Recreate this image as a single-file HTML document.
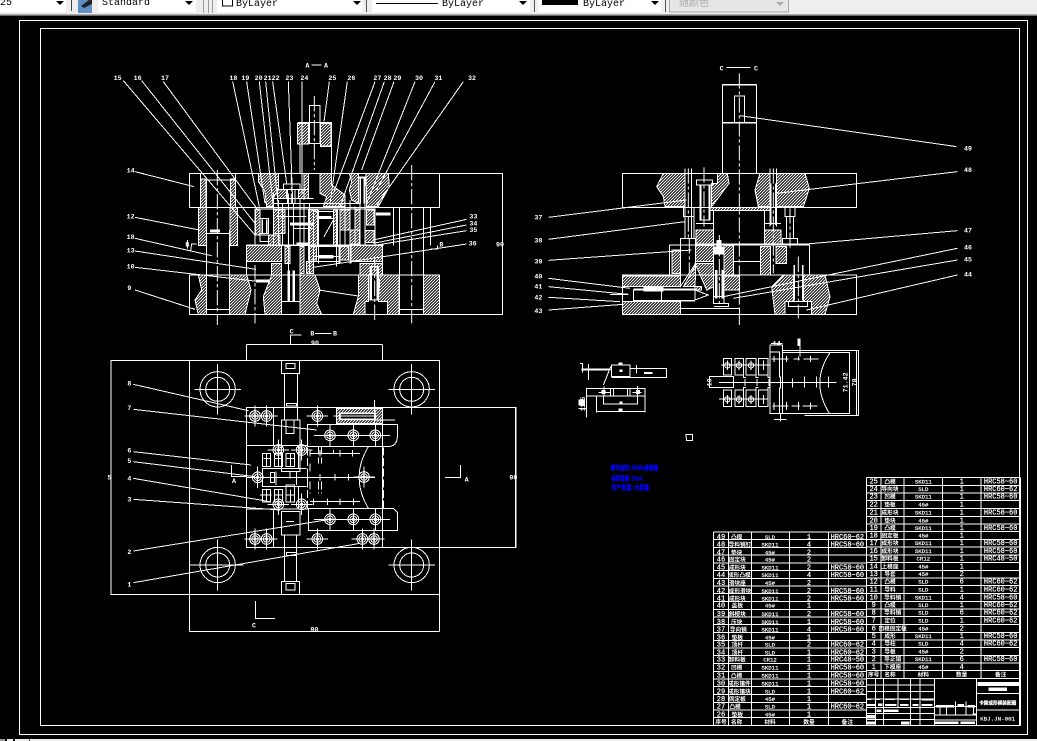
<!DOCTYPE html>
<html><head><meta charset="utf-8"><style>
html,body{margin:0;padding:0;background:#000;width:1037px;height:741px;overflow:hidden}
svg{display:block;position:absolute;left:0;top:0}
.l{fill:none;stroke:#fff;stroke-width:3;shape-rendering:crispEdges}
.h{fill:url(#h);stroke:#fff;stroke-width:3;shape-rendering:crispEdges}
.w{fill:#fff;stroke:none;shape-rendering:crispEdges}
.c{fill:none;stroke:#fff;stroke-width:3;stroke-dasharray:46 8 10 8}
text{font-family:"Liberation Mono","Noto Sans CJK SC",monospace;fill:#fff;stroke:none;font-weight:bold}
.t{font-size:20px;text-anchor:middle}
.m{font-size:21px;text-anchor:middle;font-weight:normal;stroke:#fff;stroke-width:.6px}
text[x="210"],text[x="670"]{font-size:17px}
.k{font-family:"Noto Sans CJK SC",sans-serif;font-size:17px;text-anchor:middle}
.b{font-family:"Noto Sans CJK SC",sans-serif;font-size:19px;fill:#00f;stroke:#00f;stroke-width:.8px}
.bar{font-family:"Liberation Mono","Noto Sans CJK SC",monospace;font-size:10px;fill:#000;font-weight:normal}
</style></head><body>
<svg width="1037" height="741" viewBox="0 0 1037 741" xmlns="http://www.w3.org/2000/svg">
<defs>
<pattern id="h" width="9" height="9" patternUnits="userSpaceOnUse"><path d="M-2 11L11 -2M-2 2L2 -2M7 11L11 7" stroke="#fff" stroke-width="3" fill="none"/></pattern>
<g id="s"><circle r="16" class="l"/><circle r="10" class="l"/><circle r="5" class="w"/><path class="l" d="M-32 0H32M0 -32V32"/></g>
<g id="g"><circle r="53" class="l"/><circle r="36" class="l"/><path class="l" d="M-70 0H70M0 -76V76"/></g>
</defs>
<rect width="1037" height="741" fill="#000"/>
<!-- toolbar -->
<rect width="1037" height="14" fill="#eeeeee"/>
<rect y="14" width="1037" height="1" fill="#a9a9a9"/><rect y="15" width="1037" height="1" fill="#6e6e6e"/>
<rect x="0" y="0" width="66" height="12" fill="#fff"/>
<rect x="71" y="0" width="1" height="11" fill="#444"/>
<rect x="78" y="0" width="14" height="13" fill="#5f8fc4"/><path d="M81 6L89 0H92V4L84 8Z" fill="#222"/>
<rect x="98" y="0" width="98" height="12" fill="#fff"/>
<rect x="203" y="0" width="1" height="13" fill="#999"/><rect x="208" y="0" width="1" height="13" fill="#999"/><rect x="212" y="0" width="1" height="13" fill="#999"/>
<rect x="217" y="0" width="146" height="12" fill="#fff"/>
<rect x="222.5" y="-1" width="10" height="7" fill="#fff" stroke="#000"/>
<rect x="366" y="0" width="1" height="12" fill="#555"/>
<rect x="372" y="0" width="158" height="12" fill="#fff"/><rect x="376" y="3" width="62" height="1" fill="#000"/>
<rect x="534" y="0" width="1" height="12" fill="#555"/>
<rect x="538" y="0" width="123" height="12" fill="#fff"/><rect x="542" y="0" width="36" height="5" fill="#000"/>
<rect x="665" y="0" width="1" height="12" fill="#555"/>
<rect x="669.5" y="-1" width="119" height="13" fill="#e6e6e6" stroke="#aaa"/>
<text class="bar" x="0" y="5">25</text><text class="bar" x="102" y="5">Standard</text><text class="bar" x="236" y="6">ByLayer</text><text class="bar" x="442" y="6">ByLayer</text><text class="bar" x="583" y="6">ByLayer</text>
<text class="bar" x="679" y="6" style="fill:#aaa;font-family:'Noto Sans CJK SC',sans-serif">随颜色</text>
<path fill="#000" d="M56 1H64L60 5ZM185 1H193L189 5ZM353 1H361L357 5ZM519 1H527L523 5ZM651 1H659L655 5Z"/><path fill="#aaa" d="M776 2H784L780 6Z"/>
<!-- bottom strip -->
<rect y="739" width="1037" height="2" fill="#eee"/><rect x="0" y="739" width="5" height="2" fill="#999"/><rect x="5" y="739" width="2" height="2" fill="#000"/><rect x="13" y="739" width="2" height="2" fill="#000"/><rect x="29" y="739" width="1" height="2" fill="#444"/>
<!-- frames -->
<rect x="19.5" y="20.5" width="1008" height="714" class="l" style="stroke-width:1"/>
<rect x="40.5" y="28.5" width="979" height="697" class="l" style="stroke-width:1"/>

<!-- LEFT VIEW -->
<g transform="translate(100 60) scale(.33333)">
<path class="l" d="M70 62L465 525M125 62L465 490M190 65L470 445M398 65L478 440M440 65L495 430M478 65L520 440M497 65L535 440M518 65L560 370M565 65L578 430M606 65V400M688 65L672 185M742 65L690 430M825 65L700 400M853 65L720 440M882 65L785 330M945 65L800 430M1005 65L830 390M1090 65L830 435M105 335L282 380M105 472L298 510M105 535L335 587M105 573L468 628M105 622L480 665M105 690L285 748M1100 478L820 540M1100 495L820 550M1100 512L830 555M1100 552L850 590M655 690L775 708M634 15H665"/>
<rect class="l" x="268" y="340" width="751" height="103"/>
<rect class="l" x="268" y="645" width="751" height="118"/>
<path class="l" d="M1019 340H1207V763H1019M302 340V443M406 340V443M320 360V763M388 510V763M318 360H406M320 520H388M320 748H388M899 443V763M970 443V763M899 748H970M880 443V557M992 443V557M268 645H320M388 645H775M440 605V645M600 250V340M694 260V340M592 187H695V258H660M612 340V420M628 136H660V250H628ZM545 680V763H600V680M545 725H600M795 725V763H862V725M810 620H835V720H810ZM262 540V565M1012 557V567H992M290 552H275L272 572"/>
<path class="h" d="M593 190H625V252H593ZM662 190H693V260H662ZM302 357H318V443H302ZM392 357H406V443H392ZM296 443H320V557H296ZM390 443H413V557H390Z"/>
<path class="h" d="M475 340H535V385L520 415V440H500L495 395L475 365ZM660 340H695V375L735 405V440H670L680 410L660 400ZM612 340H625V415H612ZM533 388H560V415H533ZM595 388H625V415H595ZM748 340H775V430L755 420L748 390L755 365ZM798 340H865L868 380L835 440H800Z"/>
<rect class="l" x="465" y="447" width="360" height="108"/>
<rect class="l" x="440" y="557" width="408" height="88"/>
<path class="h" d="M467 450H480V525H467ZM505 525H540V555H505ZM720 450H750V510H720ZM750 510H778V552H750ZM795 512H822V548H795ZM800 450H822V495H800ZM440 557H545V605H440ZM750 557H848V605H750ZM625 450H652V555H625ZM625 560H650V600H625ZM720 560H745V600H720ZM515 610H545V645H515ZM780 610H848V645H780ZM555 560H570V610H555ZM520 450H555V520H520ZM700 450H712V555H700ZM765 450H780V510H765ZM600 560H612V640H600ZM620 605H640V640H620Z"/>
<path class="h" d="M295 645H320V763H295L285 720L305 690ZM388 645H440L453 690L435 763H388ZM515 645H545V763H495L490 710ZM600 645H645L660 690L650 730L665 763H600V725ZM775 645H805V725H795V763H760L775 710ZM840 645H897V763H862V725H835ZM970 645H1019V763H970Z"/>
<path class="l" d="M520 400V555M535 420V555M548 430V555M565 400V640M580 430V555M600 415V660M612 430V640M628 430V640M640 450V640M655 450V610M700 450V555M710 450V620M720 450V610M735 440V555M750 420V610M765 440V555M780 430V555M795 350V555M520 430H780M520 415H640M530 470H620M580 505H640M640 455H700M650 475H700M640 590H720M640 605H720M640 622L850 590M640 560H720M550 372H600V388H550ZM563 388H585V430H563ZM700 480L672 530M480 475H505V520H480ZM480 525H505V545H480Z"/>
<path class="w" d="M440 553H850V558H440ZM465 445H825V449H465ZM775 350H797V355H775ZM778 355H783V430H778ZM790 355H795V430H790ZM563 632H570V725H563ZM578 632H585V725H578ZM812 620H816V720H812ZM830 620H834V720H830ZM590 548H625V558H590ZM468 658H510V667H468ZM330 508H360V517H330ZM828 457H872V467H828ZM570 487H640V497H570ZM650 468H695V476H650ZM655 585H700V596H655ZM484 478H489V520H484ZM498 478H503V520H498ZM715 555H720V610H715ZM750 555H754V610H750Z"/>
<path class="c" d="M352 330V795M643 108V330M935 315V790M465 615V790M824 590V785M574 328V430"/>
<g class="t"><text class="t" x="622" y="22">A</text><text class="t" x="678" y="22">A</text>
<text class="t" x="53" y="60">15</text><text class="t" x="113" y="60">16</text><text class="t" x="195" y="60">17</text><text class="t" x="400" y="60">18</text><text class="t" x="436" y="60">19</text><text class="t" x="476" y="60">20</text><text class="t" x="503" y="60">21</text><text class="t" x="527" y="60">22</text><text class="t" x="568" y="60">23</text><text class="t" x="613" y="60">24</text><text class="t" x="697" y="60">25</text><text class="t" x="754" y="60">26</text><text class="t" x="832" y="60">27</text><text class="t" x="863" y="60">28</text><text class="t" x="892" y="60">29</text><text class="t" x="957" y="60">30</text><text class="t" x="1015" y="60">31</text><text class="t" x="1116" y="60">32</text>
<text class="t" x="92" y="337">14</text><text class="t" x="92" y="475">12</text><text class="t" x="92" y="537">18</text><text class="t" x="92" y="577">13</text><text class="t" x="92" y="625">10</text><text class="t" x="88" y="690">9</text>
<text class="t" x="1120" y="476">33</text><text class="t" x="1120" y="496">34</text><text class="t" x="1120" y="516">35</text><text class="t" x="1118" y="556">36</text>
<text class="t" x="262" y="559">B</text><text class="t" x="1024" y="559">B</text><text class="t" x="1200" y="559">90</text></g>
</g>

<!-- RIGHT VIEW -->
<g transform="translate(520 60) scale(.33333)">
<path class="l" d="M620 22H692M607 73H710M660 167L1310 260M85 472L500 420M85 538L495 485M85 601L515 570M85 655L330 685M85 680L325 703M85 712L300 725M85 750L310 733M1312 335L770 400M1312 512L860 552M1312 565L610 710M1312 600L640 715M1312 645L860 750"/>
<rect class="l" x="607" y="75" width="103" height="265"/><rect class="l" x="643" y="108" width="30" height="79"/>
<rect class="l" x="307" y="340" width="703" height="103"/><rect class="l" x="307" y="645" width="703" height="118"/><rect class="l" x="448" y="555" width="420" height="90"/>
<path class="w" d="M607 186H710V190H607ZM525 551H868V556H525ZM540 375H545V480H540ZM566 375H571V480H566ZM750 370H755V495H750ZM765 370H770V495H765ZM585 630H592V715H585ZM604 630H611V715H604ZM820 615H825V722H820ZM846 615H851V722H846ZM340 686H525V691H340ZM340 720H525V725H340ZM580 560H612V584H580ZM370 680H430V695H370ZM590 540H605V580H590Z"/>
<path class="h" d="M430 340H495V440H435L430 410L410 380ZM592 340H622L627 370L590 420L575 440V370H592ZM720 340H750V440H715L705 390ZM770 340H855L868 385L850 440H770ZM570 443H750V452H570ZM528 510H580V555H528ZM733 510H783V555H733ZM527 557H580V605H527ZM525 610H580V680L560 690ZM527 615L490 680H545V690H525ZM456 570H481V640H456ZM612 557H640V645H612ZM722 560H752V645H722ZM768 560H800V610H768ZM307 648H481V680H307ZM307 725H481V763H307ZM610 648H658V690H610ZM755 680L790 645H820V725H795V763H765ZM850 645H915L930 710L915 763H875V725H850Z"/>
<path class="l" d="M495 325V535M515 325V535M750 325V500M770 325V500M530 360H578V375H530ZM540 375H570V480H540ZM580 452V550M733 452V550M580 452H733M528 490H580M733 490H783M490 443V470H522M522 443V535M795 443V470H825V443M800 470V535M820 470V535M788 535H833V555H788ZM481 535H527V610L481 680ZM805 725H862V740H805ZM795 725H875V763H795ZM340 690H425V725H340ZM525 690V720L565 705ZM582 740H625V730H582M481 745H658V763H481M580 555V710H612V555M580 710H612V730H580ZM640 605H722M780 550V555M270 703H325M660 552H820"/>
<path class="c" d="M658 40V795M505 325V540M760 325V640M552 322V500M810 445V570M835 590V775M508 535V640M598 525V730"/>
<text class="t" x="605" y="31">C</text><text class="t" x="708" y="31">C</text>
<text class="t" x="1344" y="271">49</text><text class="t" x="1344" y="336">48</text><text class="t" x="1344" y="517">47</text><text class="t" x="1344" y="569">46</text><text class="t" x="1344" y="604">45</text><text class="t" x="1344" y="650">44</text>
<text class="t" x="55" y="479">37</text><text class="t" x="55" y="547">38</text><text class="t" x="55" y="610">39</text><text class="t" x="55" y="655">40</text><text class="t" x="55" y="685">41</text><text class="t" x="55" y="719">42</text><text class="t" x="55" y="759">43</text>
</g>

<!-- PLAN VIEW -->
<g transform="translate(100 330) scale(.33333)">
<path class="l" d="M33 92H1019V793H33ZM268 92V905M1019 92V905M268 905H1019M440 43H848M440 43V92M848 43V92M605 15H572V42M645 10H695M440 232H1248V652H440ZM1247 232V652M848 232V652M520 232V347M520 537V652M440 347H622M440 537H625M395 405V440H440M1035 442H1082V405M466 813V865H525M100 163L445 242M100 238L650 300M100 365L453 405M100 395L465 440M100 445L510 515M100 508L540 540M100 663L690 568M100 758L780 640"/>
<path class="l" d="M545 92H598V130H545ZM553 130V270M592 130V270M545 270H600V425H545ZM558 100H585V115H558ZM545 545H600V615H545ZM553 615V755M590 615V755M545 755H598V793H545ZM558 760H585V780H558ZM560 220H590V228H560ZM560 668H590V676H560ZM558 270V310H582V270M562 310H578M558 575H582M622 283H892V320Q892 350 860 350H622ZM625 535H880L892 547V602H625ZM487 415H620M487 415V470H620M511 427H524V458H511ZM487 370H512V410H487ZM523 370H548V410H523ZM558 370H584V410H558ZM487 478H512V516H487ZM523 478H548V516H523ZM558 465H584V516H558ZM805 350Q750 442 805 535M570 425V445M528 465V425M590 465V425M596 345V415M596 470V535"/>
<path class="l" style="stroke-dasharray:24 8" d="M850 352V535M622 352V535M655 350V400M665 350V400M655 455V490M665 455V490M630 400V430M630 455V490"/>
<path class="l" d="M495 442H825M630 370H780M630 514H780M630 360V380M660 360V380M720 360V380M757 360V380M640 505V525M682 505V525M720 505V525M760 505V525M590 432V452M622 432V452M660 432V452M705 432V452M745 432V452M490 385H510M500 370V410M525 385H547M535 370V410M560 385H585M571 370V410M480 495H515M500 478V516M525 495H547M535 478V516M560 495H585M571 478V516"/>
<path class="h" d="M710 235H848V280H710Z"/>
<rect x="720" y="250" width="105" height="18" fill="#000" stroke="#fff" stroke-width="5"/>
<path class="l" d="M700 258H830M823 210V280M825 230V270H885M700 370V360"/>
<use href="#g" x="353" y="178"/><use href="#g" x="935" y="178"/><use href="#g" x="353" y="705"/><use href="#g" x="935" y="705"/>
<path class="l" d="M270 705H430"/>
<use href="#s" x="465" y="258"/><use href="#s" x="500" y="258"/><use href="#s" x="652" y="258"/><use href="#s" x="465" y="627"/><use href="#s" x="500" y="627"/><use href="#s" x="652" y="627"/><use href="#s" x="787" y="627"/><use href="#s" x="822" y="627"/>
<use href="#s" x="690" y="316"/><use href="#s" x="760" y="316"/><use href="#s" x="826" y="316"/><use href="#s" x="690" y="568"/><use href="#s" x="760" y="568"/><use href="#s" x="826" y="568"/>
<use href="#s" x="535" y="360"/><use href="#s" x="605" y="360"/><use href="#s" x="535" y="523"/><use href="#s" x="605" y="523"/><use href="#s" x="473" y="442"/><use href="#s" x="792" y="441"/>
<path class="l" d="M642 316H870M642 568H870"/>
<text class="t" x="575" y="10">C</text><text class="t" x="637" y="17">B</text><text class="t" x="705" y="17">B</text><text class="t" x="645" y="45">90</text><text class="t" x="28" y="449">5</text><text class="t" x="1240" y="449">90</text><text class="t" x="643" y="905">90</text>
<text class="t" x="402" y="459">A</text><text class="t" x="1100" y="454">A</text><text class="t" x="462" y="893">C</text>
<text class="t" x="88" y="167">8</text><text class="t" x="88" y="240">7</text><text class="t" x="88" y="367">6</text><text class="t" x="88" y="399">5</text><text class="t" x="88" y="451">4</text><text class="t" x="88" y="514">3</text><text class="t" x="88" y="672">2</text><text class="t" x="88" y="769">1</text>
</g>

<!-- SMALL VIEWS -->
<g transform="translate(570 330) scale(.33333)">
<path class="l" d="M30 100H38V128M35 118H125M125 105H180V140H125ZM180 115H290V142H180ZM290 115V142M125 142H180M50 175H225V198H50ZM80 198V248M225 198V248M80 245H225M100 198V224M203 198V224M100 222H203M122 175V198M130 175V198M172 175V198M180 175V198M102 170V198M203 168V198M85 187H120M187 187H215M200 105V130M55 102V150M122 110L100 165M50 175V262M25 235H50M348.5 313H368V332H349Z"/>
<path class="w" d="M35 115H120V122H35ZM222 126H248V132H222ZM145 97H158V104H145ZM148 118H158V126H148ZM95 180H107V192H95ZM198 180H210V192H198ZM25 208H45V226H25ZM145 235H158V243H145ZM682 25H692V48H682ZM148 214H158V222H148Z"/>
<rect class="l" x="600" y="45" width="38" height="205"/>
<path class="l" d="M600 66H628V143M628 172V250M600 250V170M418 140H490V172H418ZM460 85H485V135H460ZM495 85H521V135H495ZM528 85H558V135H528ZM565 85H594V135H565ZM460 180H485V230H460ZM495 180H521V230H495ZM528 180H558V230H528ZM565 180H594V230H565ZM491 140V172M521 135V143H528M558 135V143H565M594 135V143H600M521 180V172H528M558 180V172H565M594 180V172H600M638 68H838V250H638M838 68V250M638 62H865V256H703M860 62V255M603 40H638M780 68Q720 157 778 250M447 157H800M453 105H600M447 207H595M605 87H655M670 87H690M700 87H745M607 228H655M665 228H690M697 228H742M632 140V175M612 78V96M650 78V96M612 218V240M650 216V240M686 80V92M722 78V96M685 216V240M722 218V238M525 147V168M561 147V168M597 147V168M668 145V172M703 140V172M740 140V172M775 140V172M472 92V120M507 92V120M543 92V120M580 92V120M472 195V222M507 195V222M543 195V222M580 195V222M612 268H650M631 250V275M690 48V80"/>
<circle cx="472" cy="106" r="8" class="l"/><circle cx="507" cy="106" r="8" class="l"/><circle cx="543" cy="106" r="8" class="l"/><circle cx="472" cy="208" r="8" class="l"/><circle cx="507" cy="208" r="8" class="l"/><circle cx="543" cy="208" r="8" class="l"/>
<text class="t" x="620" y="46">14</text>
<text class="t" transform="translate(833 157) rotate(-90)">71.42</text><text class="t" transform="translate(860 157) rotate(-90)">78</text>
<text class="t" transform="translate(424 157) rotate(-90)">10</text>
<text class="t" transform="translate(45 222) rotate(-90)" style="font-size:18px">11.5</text>
<text class="b" x="122" y="420" textLength="143" lengthAdjust="spacingAndGlyphs">零件材料: 65Mn弹簧钢</text>
<text class="b" x="124" y="451" textLength="94" lengthAdjust="spacingAndGlyphs">材料厚度: 1mm</text>
<text class="b" x="124" y="479" textLength="114" lengthAdjust="spacingAndGlyphs">生产批量: 大批量</text>
</g>

<!-- TABLES -->
<g transform="translate(700 470) scale(.33333)">
<path class="l" d="M499 22H961M499 46H961M499 69H961M499 92H961M499 116H961M499 139H961M499 162H961M499 185H961M499 208H961M499 231H961M499 255H961M499 278H961M499 301H961M499 324H961M499 347H961M499 371H961M499 394H961M499 417H961M499 440H961M499 464H961M499 487H961M499 510H961M499 533H961M499 556H961M499 579H961M499 602H961M499 625H961"/>
<path class="l" d="M499 22V766M543 22V625M612 22V625M728 22V625M843 22V625M961 22V766"/>
<path class="l" d="M40 186H499M40 209H499M40 232H499M40 255H499M40 279H499M40 302H499M40 325H499M40 348H499M40 371H499M40 395H499M40 418H499M40 441H499M40 464H499M40 488H499M40 511H499M40 534H499M40 557H499M40 580H499M40 604H499M40 627H499M40 650H499M40 673H499M40 697H499M40 720H499M40 743H499M40 766H499"/>
<path class="l" d="M40 186V766M85 186V766M155 186V766M268 186V766M385 186V766"/>
<path class="l" d="M499 645H703M499 665H703M499 687H703M499 712H703M499 730H703M499 748H703M499 766H961M527 625V766M550 625V766M594 625V712M632 625V766M660 625V766M703 625V766M830 625V766M830 670H961M830 720H961M703 710H830M703 735H830M703 750H830M767 695V735M798 695V735M720 710V735M740 710V735M820 710V735"/>
<path class="w" d="M833 636H957V648H833ZM865 652H921V663H865ZM708 705H762V712H708ZM772 702H792V708H772ZM803 705H825V712H803ZM705 755H775V762H705ZM782 755H825V762H782ZM500 685H515V690H500ZM528 685H540V690H528ZM555 685H585V690H555ZM600 685H625V690H600ZM638 685H655V690H638ZM664 685H700V692H664ZM500 702H525V708H500ZM534 700H548V708H534ZM555 702H590V708H555ZM600 702H625V708H600ZM638 702H655V708H638ZM664 702H698V708H664ZM530 718H545V726H530ZM552 718H595V726H552ZM500 735H525V745H500ZM500 755H525V763H500ZM603 755H628V763H603ZM818 730H830V736H818Z"/>
<text class="k" x="893" y="703" style="font-size:14px;stroke:#fff;stroke-width:.6px">卡簧成形模装配图</text><text class="t" x="893" y="752" style="font-weight:normal;font-size:17.5px;stroke:#fff;stroke-width:.5px">KBJ.JN-001</text>
<g>
<text class="m" x="521" y="40">25</text><text class="k" x="570" y="40">凸模</text><text class="m" x="670" y="40">SKD11</text><text class="m" x="785" y="40">1</text><text class="m" x="902" y="40">HRC58~60</text>
<text class="m" x="521" y="63">24</text><text class="k" x="570" y="63">导向块</text><text class="m" x="670" y="63">SLD</text><text class="m" x="785" y="63">1</text><text class="m" x="902" y="63">HRC60~62</text>
<text class="m" x="521" y="86">23</text><text class="k" x="570" y="86">凹模</text><text class="m" x="670" y="86">SKD11</text><text class="m" x="785" y="86">1</text><text class="m" x="902" y="86">HRC58~60</text>
<text class="m" x="521" y="109">22</text><text class="k" x="570" y="109">垫板</text><text class="m" x="670" y="109">45#</text><text class="m" x="785" y="109">1</text>
<text class="m" x="521" y="133">21</text><text class="k" x="570" y="133">成形块</text><text class="m" x="670" y="133">SKD11</text><text class="m" x="785" y="133">1</text><text class="m" x="902" y="133">HRC58~60</text>
<text class="m" x="521" y="157">20</text><text class="k" x="570" y="157">垫块</text><text class="m" x="670" y="157">45#</text><text class="m" x="785" y="157">1</text>
<text class="m" x="521" y="180">19</text><text class="k" x="570" y="180">凸模</text><text class="m" x="670" y="180">SKD11</text><text class="m" x="785" y="180">1</text><text class="m" x="902" y="180">HRC58~60</text>
<text class="m" x="521" y="202">18</text><text class="k" x="570" y="202">固定板</text><text class="m" x="670" y="202">45#</text><text class="m" x="785" y="202">1</text>
<text class="m" x="521" y="225">17</text><text class="k" x="570" y="225">成形块</text><text class="m" x="670" y="225">SKD11</text><text class="m" x="785" y="225">1</text><text class="m" x="902" y="225">HRC58~60</text>
<text class="m" x="521" y="249">16</text><text class="k" x="570" y="249">成形块</text><text class="m" x="670" y="249">SKD11</text><text class="m" x="785" y="249">1</text><text class="m" x="902" y="249">HRC58~60</text>
<text class="m" x="521" y="272">15</text><text class="k" x="570" y="272">卸料板</text><text class="m" x="670" y="272">CR12</text><text class="m" x="785" y="272">1</text><text class="m" x="902" y="272">HRC48~50</text>
<text class="m" x="521" y="295">14</text><text class="k" x="570" y="295">上模座</text><text class="m" x="670" y="295">45#</text><text class="m" x="785" y="295">1</text>
<text class="m" x="521" y="318">13</text><text class="k" x="570" y="318">导套</text><text class="m" x="670" y="318">45#</text><text class="m" x="785" y="318">2</text>
<text class="m" x="521" y="341">12</text><text class="k" x="570" y="341">凸模</text><text class="m" x="670" y="341">SLD</text><text class="m" x="785" y="341">6</text><text class="m" x="902" y="341">HRC60~62</text>
<text class="m" x="521" y="365">11</text><text class="k" x="570" y="365">导料</text><text class="m" x="670" y="365">SLD</text><text class="m" x="785" y="365">1</text><text class="m" x="902" y="365">HRC60~62</text>
<text class="m" x="521" y="388">10</text><text class="k" x="578" y="388">导料销</text><text class="m" x="670" y="388">SKD11</text><text class="m" x="785" y="388">4</text><text class="m" x="902" y="388">HRC58~60</text>
<text class="m" x="521" y="411">9</text><text class="k" x="570" y="411">凸模</text><text class="m" x="670" y="411">SLD</text><text class="m" x="785" y="411">1</text><text class="m" x="902" y="411">HRC60~62</text>
<text class="m" x="521" y="434">8</text><text class="k" x="578" y="434">导料销</text><text class="m" x="670" y="434">SLD</text><text class="m" x="785" y="434">6</text><text class="m" x="902" y="434">HRC60~62</text>
<text class="m" x="521" y="458">7</text><text class="k" x="570" y="458">定位</text><text class="m" x="670" y="458">SLD</text><text class="m" x="785" y="458">1</text><text class="m" x="902" y="458">HRC60~62</text>
<text class="m" x="521" y="481">6</text><text class="k" x="578" y="481">凹模固定板</text><text class="m" x="670" y="481">45#</text><text class="m" x="785" y="481">2</text>
<text class="m" x="521" y="504">5</text><text class="k" x="570" y="504">成形</text><text class="m" x="670" y="504">SKD11</text><text class="m" x="785" y="504">1</text><text class="m" x="902" y="504">HRC58~60</text>
<text class="m" x="521" y="527">4</text><text class="k" x="570" y="527">导柱</text><text class="m" x="670" y="527">SLD</text><text class="m" x="785" y="527">4</text><text class="m" x="902" y="527">HRC60~62</text>
<text class="m" x="521" y="550">3</text><text class="k" x="570" y="550">导板</text><text class="m" x="670" y="550">45#</text><text class="m" x="785" y="550">2</text>
<text class="m" x="521" y="573">2</text><text class="k" x="578" y="573">导正销</text><text class="m" x="670" y="573">SKD11</text><text class="m" x="785" y="573">6</text><text class="m" x="902" y="573">HRC58~60</text>
<text class="m" x="521" y="597">1</text><text class="k" x="578" y="597">下模座</text><text class="m" x="670" y="597">45#</text><text class="m" x="785" y="597">4</text>
<text class="k" x="521" y="620">序号</text><text class="k" x="570" y="620">名称</text><text class="k" x="670" y="620">材料</text><text class="k" x="785" y="620">数量</text><text class="k" x="902" y="620">备注</text>

<text class="m" x="63" y="207">49</text><text class="k" x="110" y="207">凸模</text><text class="m" x="210" y="207">SLD</text><text class="m" x="327" y="207">1</text><text class="m" x="442" y="207">HRC60~62</text>
<text class="m" x="63" y="229">48</text><text class="k" x="120" y="229">导料销钉</text><text class="m" x="210" y="229">SKD11</text><text class="m" x="327" y="229">4</text><text class="m" x="442" y="229">HRC58~60</text>
<text class="m" x="63" y="253">47</text><text class="k" x="110" y="253">垫块</text><text class="m" x="210" y="253">45#</text><text class="m" x="327" y="253">2</text>
<text class="m" x="63" y="275">46</text><text class="k" x="112" y="275">固定块</text><text class="m" x="210" y="275">45#</text><text class="m" x="327" y="275">2</text>
<text class="m" x="63" y="299">45</text><text class="k" x="112" y="299">成形块</text><text class="m" x="210" y="299">SKD11</text><text class="m" x="327" y="299">2</text><text class="m" x="442" y="299">HRC58~60</text>
<text class="m" x="63" y="321">44</text><text class="k" x="118" y="321">成形凸模</text><text class="m" x="210" y="321">SKD11</text><text class="m" x="327" y="321">4</text><text class="m" x="442" y="321">HRC58~60</text>
<text class="m" x="63" y="345">43</text><text class="k" x="112" y="345">滑块座</text><text class="m" x="210" y="345">45#</text><text class="m" x="327" y="345">2</text>
<text class="m" x="63" y="369">42</text><text class="k" x="120" y="369">成形滑块</text><text class="m" x="210" y="369">SKD11</text><text class="m" x="327" y="369">2</text><text class="m" x="442" y="369">HRC58~60</text>
<text class="m" x="63" y="391">41</text><text class="k" x="112" y="391">成形块</text><text class="m" x="210" y="391">SKD11</text><text class="m" x="327" y="391">2</text><text class="m" x="442" y="391">HRC58~60</text>
<text class="m" x="63" y="412">40</text><text class="k" x="112" y="412">盖板</text><text class="m" x="210" y="412">45#</text><text class="m" x="327" y="412">1</text>
<text class="m" x="63" y="438">39</text><text class="k" x="112" y="438">斜楔块</text><text class="m" x="210" y="438">SKD11</text><text class="m" x="327" y="438">2</text><text class="m" x="442" y="438">HRC58~60</text>
<text class="m" x="63" y="462">38</text><text class="k" x="110" y="462">压块</text><text class="m" x="210" y="462">SKD11</text><text class="m" x="327" y="462">1</text><text class="m" x="442" y="462">HRC58~60</text>
<text class="m" x="63" y="484">37</text><text class="k" x="115" y="484">导向销</text><text class="m" x="210" y="484">SKD11</text><text class="m" x="327" y="484">4</text><text class="m" x="442" y="484">HRC58~60</text>
<text class="m" x="63" y="508">36</text><text class="k" x="112" y="508">垫板</text><text class="m" x="210" y="508">45#</text><text class="m" x="327" y="508">1</text>
<text class="m" x="63" y="530">35</text><text class="k" x="112" y="530">顶杆</text><text class="m" x="210" y="530">SLD</text><text class="m" x="327" y="530">2</text><text class="m" x="442" y="530">HRC60~62</text>
<text class="m" x="63" y="553">34</text><text class="k" x="112" y="553">顶杆</text><text class="m" x="210" y="553">SLD</text><text class="m" x="327" y="553">1</text><text class="m" x="442" y="553">HRC60~62</text>
<text class="m" x="63" y="575">33</text><text class="k" x="112" y="575">卸料板</text><text class="m" x="210" y="575">CR12</text><text class="m" x="327" y="575">1</text><text class="m" x="442" y="575">HRC48~50</text>
<text class="m" x="63" y="599">32</text><text class="k" x="110" y="599">凹模</text><text class="m" x="210" y="599">SKD11</text><text class="m" x="327" y="599">1</text><text class="m" x="442" y="599">HRC58~60</text>
<text class="m" x="63" y="623">31</text><text class="k" x="110" y="623">凸模</text><text class="m" x="210" y="623">SKD11</text><text class="m" x="327" y="623">1</text><text class="m" x="442" y="623">HRC58~60</text>
<text class="m" x="63" y="646">30</text><text class="k" x="118" y="646">成形镶件</text><text class="m" x="210" y="646">SKD11</text><text class="m" x="327" y="646">1</text><text class="m" x="442" y="646">HRC58~60</text>
<text class="m" x="63" y="670">29</text><text class="k" x="118" y="670">成形镶块</text><text class="m" x="210" y="670">SLD</text><text class="m" x="327" y="670">1</text><text class="m" x="442" y="670">HRC60~62</text>
<text class="m" x="63" y="693">28</text><text class="k" x="112" y="693">固定板</text><text class="m" x="210" y="693">45#</text><text class="m" x="327" y="693">1</text>
<text class="m" x="63" y="715">27</text><text class="k" x="105" y="715">凸模</text><text class="m" x="210" y="715">SLD</text><text class="m" x="327" y="715">1</text><text class="m" x="442" y="715">HRC60~62</text>
<text class="m" x="63" y="739">26</text><text class="k" x="112" y="739">垫板</text><text class="m" x="210" y="739">45#</text><text class="m" x="327" y="739">1</text>
<text class="k" x="63" y="762">序号</text><text class="k" x="110" y="762">名称</text><text class="k" x="210" y="762">材料</text><text class="k" x="327" y="762">数量</text><text class="k" x="442" y="762">备注</text>
</g>
</g>
</svg>
</body></html>
